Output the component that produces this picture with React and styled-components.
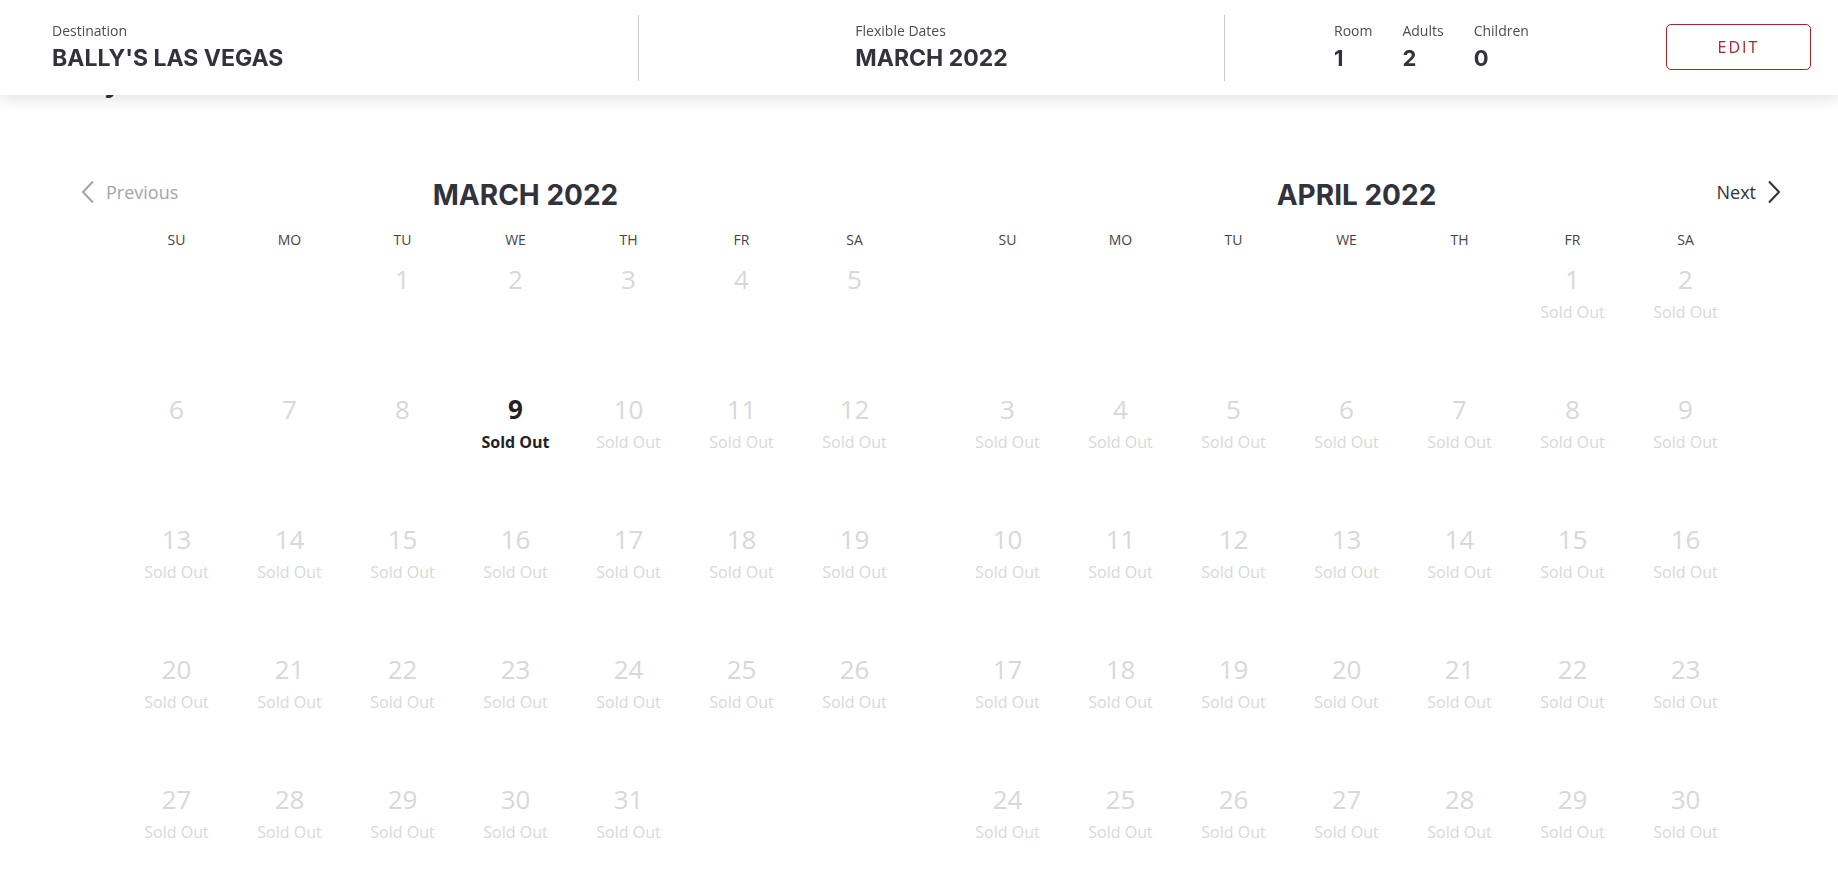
import React from 'react';
import styled, { createGlobalStyle } from 'styled-components';

const dark = '#32323c';
const faded = '#d8d8d8';
const red = '#a3282d';

const GlobalStyle = createGlobalStyle`
  body {
    margin: 0;
    background: #fff;
    font-family: "Open Sans", "Liberation Sans", sans-serif;
    color: #333;
  }
`;

const TopBar = styled.header`
  position: fixed;
  top: 0;
  left: 0;
  right: 0;
  z-index: 10;
  height: 95px;
  background: #fff;
  box-shadow: 0 3px 14px rgba(0, 0, 0, 0.13);
  display: grid;
  grid-template-columns: 639px 586px 1fr;
  align-items: center;
`;

const Section = styled.div`
  height: 66px;
  display: flex;
  align-items: center;
  justify-content: ${(p) => (p.$center ? 'center' : 'flex-start')};
  border-right: ${(p) => (p.$divider ? '1px solid #c9c9c9' : 'none')};
  padding-left: ${(p) => p.$pl || 0}px;
  padding-right: ${(p) => p.$pr || 0}px;
  padding-bottom: 2px;
  box-sizing: border-box;
`;

const Field = styled.div`
  display: flex;
  flex-direction: column;
`;

const Label = styled.span`
  font-size: 14px;
  line-height: 20px;
  color: #4d4d4d;
`;

const Value = styled.span`
  font-family: Inter, "Liberation Sans", sans-serif;
  font-weight: 700;
  font-size: ${(p) => p.$size || 23}px;
  line-height: 28px;
  margin-top: 3px;
  color: ${dark};
`;

const Guests = styled.div`
  display: flex;
  gap: 30px;
`;

const EditButton = styled.button`
  margin-left: auto;
  width: 145px;
  height: 46px;
  border: 1px solid ${red};
  border-radius: 5px;
  background: #fff;
  color: ${red};
  font-family: "Open Sans", "Liberation Sans", sans-serif;
  font-size: 16px;
  letter-spacing: 2px;
  cursor: pointer;
`;

const Main = styled.main`
  padding-top: 64px;
`;

/* page heading, scrolled up under the fixed bar: only the descender shows */
const Heading = styled.h1`
  margin: 0 0 0 52px;
  font-family: Inter, "Liberation Sans", sans-serif;
  font-weight: 700;
  font-size: 28px;
  line-height: 36px;
  color: ${dark};
`;

const Calendar = styled.div`
  display: grid;
  grid-template-columns: 39px 791px 40px 791px 39px;
  margin: 75px 0 0 81px;
`;

const NavButton = styled.button`
  grid-row: 1;
  grid-column: ${(p) => (p.$next ? '4 / 6' : '1 / 3')};
  justify-self: ${(p) => (p.$next ? 'end' : 'start')};
  align-self: start;
  height: 34px;
  display: flex;
  align-items: center;
  gap: 11px;
  padding: 0;
  border: none;
  background: none;
  font-family: "Open Sans", "Liberation Sans", sans-serif;
  font-size: 18px;
  color: ${(p) => (p.$next ? '#333' : '#a5a5a5')};
  cursor: pointer;
`;

const MonthTitle = styled.h2`
  grid-row: 1;
  grid-column: ${(p) => p.$col};
  margin: 0;
  padding: 2px 0 0 20px;
  text-align: center;
  font-family: Inter, "Liberation Sans", sans-serif;
  font-weight: 700;
  font-size: 28px;
  line-height: 36px;
  color: ${dark};
`;

const MonthGrid = styled.div`
  grid-row: 2;
  grid-column: ${(p) => p.$col};
  margin-top: 17px;
  display: grid;
  grid-template-columns: repeat(7, 113px);
  grid-template-rows: 31px;
  grid-auto-rows: 130px;
`;

const WeekDay = styled.div`
  text-align: center;
  font-size: 14px;
  line-height: 20px;
  color: #444;
`;

const Cell = styled.div`
  display: flex;
  flex-direction: column;
  align-items: center;
`;

const DayNum = styled.span`
  font-size: 26px;
  line-height: 36px;
  font-weight: ${(p) => (p.$active ? 700 : 400)};
  color: ${(p) => (p.$active ? '#222' : faded)};
`;

const SoldOut = styled.span`
  margin-top: 2px;
  font-size: 16px;
  line-height: 26px;
  font-weight: ${(p) => (p.$active ? 700 : 400)};
  color: ${(p) => (p.$active ? '#222' : faded)};
`;

const Chevron = ({ left, color }) => (
  <svg width="14" height="24" viewBox="0 0 14 24" fill="none">
    <polyline
      points={left ? '12,1.5 2,12 12,22.5' : '2,1.5 12,12 2,22.5'}
      stroke={color}
      strokeWidth="2"
      strokeLinejoin="miter"
    />
  </svg>
);

const weekDays = ['SU', 'MO', 'TU', 'WE', 'TH', 'FR', 'SA'];

const buildDays = (offset, count, soldFrom, active) => {
  const cells = [];
  for (let i = 0; i < offset; i++) cells.push(null);
  for (let d = 1; d <= count; d++) {
    cells.push({ day: d, sold: d >= soldFrom, active: d === active });
  }
  return cells;
};

const Month = ({ col, cells }) => (
  <MonthGrid $col={col}>
    {weekDays.map((w) => (
      <WeekDay key={w}>{w}</WeekDay>
    ))}
    {cells.map((c, i) =>
      c ? (
        <Cell key={i}>
          <DayNum $active={c.active}>{c.day}</DayNum>
          {c.sold && <SoldOut $active={c.active}>Sold Out</SoldOut>}
        </Cell>
      ) : (
        <Cell key={i} />
      )
    )}
  </MonthGrid>
);

const App = () => (
  <>
    <GlobalStyle />
    <TopBar>
      <Section $divider $pl={52}>
        <Field>
          <Label>Destination</Label>
          <Value>BALLY'S LAS VEGAS</Value>
        </Field>
      </Section>
      <Section $divider $center>
        <Field>
          <Label>Flexible Dates</Label>
          <Value>MARCH 2022</Value>
        </Field>
      </Section>
      <Section $pl={109} $pr={27}>
        <Guests>
          <Field>
            <Label>Room</Label>
            <Value $size={22}>1</Value>
          </Field>
          <Field>
            <Label>Adults</Label>
            <Value $size={22}>2</Value>
          </Field>
          <Field>
            <Label>Children</Label>
            <Value $size={22}>0</Value>
          </Field>
        </Guests>
        <EditButton>EDIT</EditButton>
      </Section>
    </TopBar>
    <Main>
      <Heading>Daily Rates</Heading>
      <Calendar>
        <NavButton>
          <Chevron left color="#a5a5a5" />
          Previous
        </NavButton>
        <MonthTitle $col={2}>MARCH 2022</MonthTitle>
        <MonthTitle $col={4}>APRIL 2022</MonthTitle>
        <NavButton $next>
          Next
          <Chevron color="#333" />
        </NavButton>
        <Month col={2} cells={buildDays(2, 31, 9, 9)} />
        <Month col={4} cells={buildDays(5, 30, 1, null)} />
      </Calendar>
    </Main>
  </>
);

export default App;
